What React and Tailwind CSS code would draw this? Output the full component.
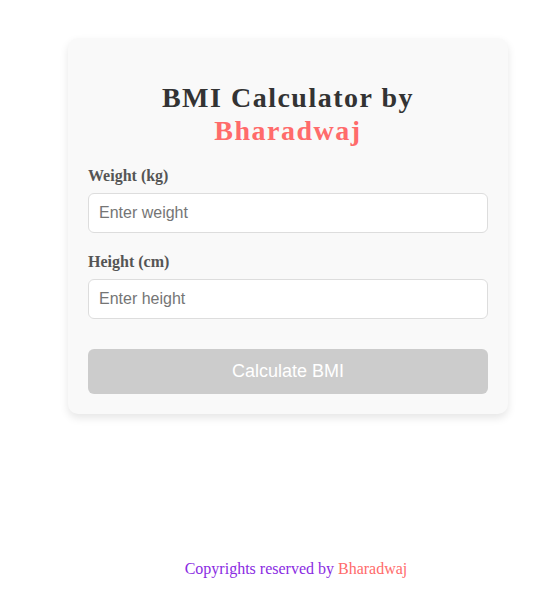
import React, { useState } from "react";

// Simple BMI calculator card with footer credit
export default function App() {
  const [weight, setWeight] = useState("");
  const [height, setHeight] = useState("");

  const serif = "font-['Liberation_Serif','Times_New_Roman',serif]";
  const sans = "font-['Liberation_Sans',Arial,sans-serif]";

  return (
    <div className="min-h-[597px] w-[560px] bg-white pt-[38px]">
      {/* Card */}
      <div className="ml-[68px] w-[440px] rounded-[10px] bg-[#f9f9f9] p-5 shadow-[0_4px_8px_rgba(0,0,0,0.1)]">
        <h2
          className={`${serif} mb-5 mt-[23px] text-center text-[28px] font-bold leading-[33px] tracking-[1.5px] text-[#333]`}
        >
          BMI Calculator by <span className="text-[#ff6b6b]">Bharadwaj</span>
        </h2>

        {/* Weight */}
        <div className="mb-5">
          <label className={`${serif} mb-[9px] block text-[16px] font-bold leading-[17px] text-[#555]`}>
            Weight (kg)
          </label>
          <input
            type="number"
            value={weight}
            onChange={(e) => setWeight(e.target.value)}
            placeholder="Enter weight"
            className={`${sans} block h-10 w-full rounded-[6px] border border-[#ddd] bg-white px-[10px] text-[16px] text-[#333] outline-none placeholder:text-[#757575]`}
          />
        </div>

        {/* Height */}
        <div className="mb-[30px]">
          <label className={`${serif} mb-[9px] block text-[16px] font-bold leading-[17px] text-[#555]`}>
            Height (cm)
          </label>
          <input
            type="number"
            value={height}
            onChange={(e) => setHeight(e.target.value)}
            placeholder="Enter height"
            className={`${sans} block h-10 w-full rounded-[6px] border border-[#ddd] bg-white px-[10px] text-[16px] text-[#333] outline-none placeholder:text-[#757575]`}
          />
        </div>

        <button
          disabled={!weight || !height}
          className={`${sans} block h-[45px] w-full rounded-[6px] bg-[#ccc] text-[18px] text-white`}
        >
          Calculate BMI
        </button>
      </div>

      {/* Footer */}
      <p className={`${serif} ml-[68px] mt-[146px] w-[456px] text-center text-[16px] leading-[18px] text-[#8a2be2]`}>
        Copyrights reserved by <span className="text-[#ff6b6b]">Bharadwaj</span>
      </p>
    </div>
  );
}
